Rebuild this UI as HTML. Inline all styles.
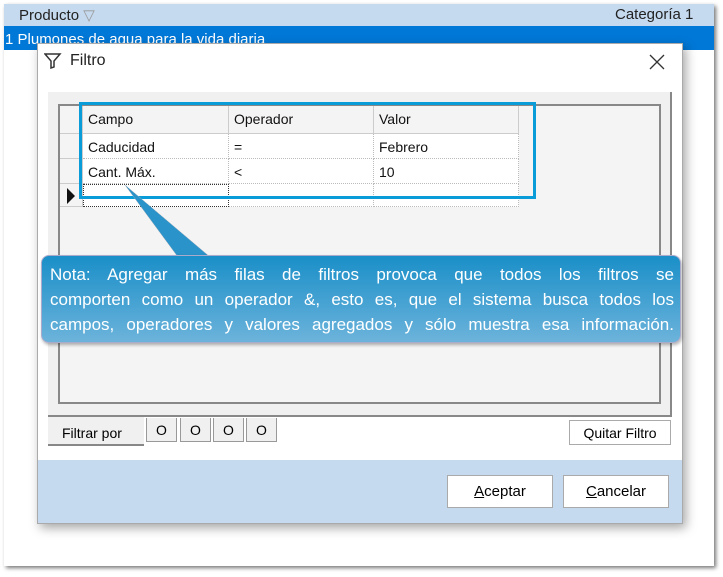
<!DOCTYPE html><html><head><style>
body{margin:0;width:723px;height:577px;background:#fff;font-family:"Liberation Sans",sans-serif;position:relative;overflow:hidden}
.a{position:absolute}
.frame{left:4px;top:4px;width:710px;height:562px;background:#fff;box-shadow:2px 2px 4px #777;}
.cell{position:absolute;font-size:14px;color:#111;border-right:1px dotted #bbb;border-bottom:1px dotted #bbb;box-sizing:border-box;padding:5px 0 0 5px;background:#fff}
.hd{background:#f4f4f4;border-right:1px solid #ccc;border-bottom:1px solid #ccc}
.btn{position:absolute;background:#fff;border:1px solid #aaa;font-size:15px;text-align:center;box-sizing:border-box}
.tab{position:absolute;top:418px;width:31px;height:24px;border:1px solid #999;border-top:none;background:#f0f0f0;font-size:14px;text-align:center;box-sizing:border-box;padding-top:4px}
.ln{text-align:justify;text-align-last:justify;white-space:nowrap;height:25px}
</style></head><body>
<div class="a frame"></div>
<div class="a" style="left:4px;top:4px;width:710px;height:22px;background:#c5d9ef"></div>
<div class="a" style="left:19px;top:6px;font-size:15px;color:#222">Producto <span style="color:#999">▽</span></div>
<div class="a" style="left:615px;top:6px;font-size:15px;color:#222">Categoría 1</div>
<div class="a" style="left:4px;top:26px;width:710px;height:24px;background:#0078d7"></div>
<div class="a" style="left:5px;top:31px;font-size:15px;color:#fff">1 Plumones de agua para la vida diaria</div>
<div class="a" style="left:37px;top:43px;width:646px;height:481px;background:#fff;border:1px solid #aaa;box-sizing:border-box;box-shadow:3px 4px 10px rgba(0,0,0,.35)"></div>
<svg class="a" style="left:44px;top:53px" width="18" height="16"><path d="M1 1h15l-6 7v6l-3 1v-7z" fill="none" stroke="#333" stroke-width="1.5"/></svg>
<div class="a" style="left:70px;top:52px;font-size:16px;color:#222">Filtro</div>
<svg class="a" style="left:649px;top:54px" width="16" height="16"><path d="M1 1L15 15M15 1L1 15" stroke="#333" stroke-width="1.3"/></svg>
<div class="a" style="left:48px;top:92px;width:624px;height:325px;background:#f0f0f0;border-right:2px solid #888;border-bottom:2px solid #888;box-sizing:border-box"></div>
<div class="a" style="left:58px;top:104px;width:603px;height:300px;background:#f4f4f4;border:2px solid #888;box-sizing:border-box"></div>
<div class="cell hd" style="left:60px;top:106px;width:23px;height:28px"></div>
<div class="cell hd" style="left:83px;top:106px;width:146px;height:28px">Campo</div>
<div class="cell hd" style="left:229px;top:106px;width:145px;height:28px">Operador</div>
<div class="cell hd" style="left:374px;top:106px;width:145px;height:28px">Valor</div>
<div class="cell hd" style="left:60px;top:134px;width:23px;height:25px"></div>
<div class="cell" style="left:83px;top:134px;width:146px;height:25px">Caducidad</div>
<div class="cell" style="left:229px;top:134px;width:145px;height:25px">=</div>
<div class="cell" style="left:374px;top:134px;width:145px;height:25px">Febrero</div>
<div class="cell hd" style="left:60px;top:159px;width:23px;height:25px"></div>
<div class="cell" style="left:83px;top:159px;width:146px;height:25px">Cant. Máx.</div>
<div class="cell" style="left:229px;top:159px;width:145px;height:25px">&lt;</div>
<div class="cell" style="left:374px;top:159px;width:145px;height:25px">10</div>
<div class="cell hd" style="left:60px;top:184px;width:23px;height:23px"></div>
<div class="cell" style="left:83px;top:184px;width:146px;height:23px;border:1px dotted #333"></div>
<div class="cell" style="left:229px;top:184px;width:145px;height:23px"></div>
<div class="cell" style="left:374px;top:184px;width:145px;height:23px"></div>
<svg class="a" style="left:66px;top:187px" width="10" height="18"><path d="M1 1l8 8-8 8z" fill="#111"/></svg>
<div class="a" style="left:79px;top:102px;width:457px;height:97px;border:3px solid #0a9cd8;box-sizing:border-box"></div>
<svg class="a" style="left:0;top:0" width="723" height="577"><path d="M125 185L178 257H210Z" fill="#2a93c9" stroke="#9ab" stroke-width=".5"/></svg>
<div class="a" style="left:41px;top:255px;width:640px;height:88px;border-radius:8px;background:linear-gradient(#1a8fc8,#6cb3db);border:1px solid #aac;box-sizing:border-box;box-shadow:1px 2px 3px rgba(0,0,0,.3)"></div>
<div class="a" style="left:50px;top:262px;width:624px;font-size:17px;line-height:25px;color:#fff">
<div class="ln">Nota: Agregar más filas de filtros provoca que todos los filtros se</div>
<div class="ln">comporten como un operador &amp;, esto es, que el sistema busca todos los</div>
<div class="ln">campos, operadores y valores agregados y sólo muestra esa información.</div>
</div>
<div class="a" style="left:48px;top:417px;width:96px;height:29px;background:#f0f0f0;border-bottom:2px solid #888;box-sizing:border-box;font-size:14px;padding:8px 0 0 14px">Filtrar por</div>
<div class="tab" style="left:146px">O</div><div class="tab" style="left:180px">O</div><div class="tab" style="left:213px">O</div><div class="tab" style="left:246px">O</div>
<div class="btn" style="left:569px;top:420px;width:102px;height:25px;font-size:14px;padding-top:4px">Quitar Filtro</div>
<div class="a" style="left:38px;top:460px;width:644px;height:63px;background:#c5d9ef"></div>
<div class="btn" style="left:447px;top:475px;width:106px;height:33px;padding-top:7px"><u>A</u>ceptar</div>
<div class="btn" style="left:563px;top:475px;width:106px;height:33px;padding-top:7px"><u>C</u>ancelar</div>
</body></html>
